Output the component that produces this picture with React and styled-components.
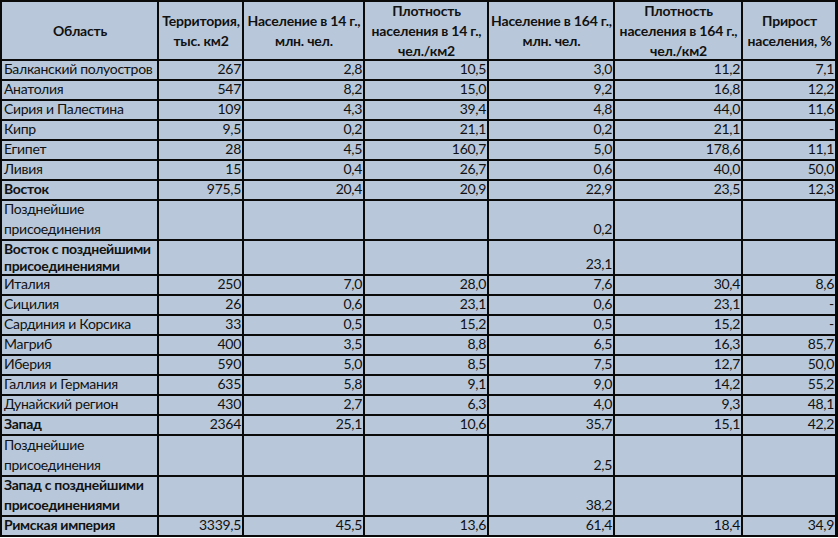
import React from 'react'
import styled, { createGlobalStyle } from 'styled-components'

const GlobalStyle = createGlobalStyle`
  html, body {
    margin: 0;
    padding: 0;
    background: #ffffff;
  }
  body {
    font-family: Lato, "Open Sans", "Liberation Sans", sans-serif;
    color: #111;
  }
`

const COLS = '155px 83px 119px 122px 124px 126px 92px'

const Sheet = styled.div`
  width: 838px;
  box-sizing: border-box;
  display: flex;
  flex-direction: column;
  gap: 2px;
  padding: 2px;
  background: #0a0a0a;
`

const Row = styled.div`
  display: grid;
  grid-template-columns: ${COLS};
  gap: 2px;
  height: ${p => p.h}px;
`

const Cell = styled.div`
  background: #b8c8da;
  display: flex;
  align-items: ${p => (p.head ? 'center' : 'flex-end')};
  justify-content: ${p => (p.head ? 'center' : p.num ? 'flex-end' : 'flex-start')};
  text-align: ${p => (p.head ? 'center' : p.num ? 'right' : 'left')};
  padding: 0 1px 0 2px;
  font-size: 14px;
  letter-spacing: ${p => (p.head ? '-0.2px' : '-0.3px')};
  line-height: ${p => (p.tight ? 17 : 20)}px;
  font-weight: ${p => (p.bold ? 700 : 400)};
  white-space: nowrap;
  overflow: hidden;
  min-width: 0;
`

const headers = [
  ['Область'],
  ['Территория,', 'тыс. км2'],
  ['Население в 14 г.,', 'млн. чел.'],
  ['Плотность', 'населения в 14 г.,', 'чел./км2'],
  ['Население в 164 г.,', 'млн. чел.'],
  ['Плотность', 'населения в 164 г.,', 'чел./км2'],
  ['Прирост', 'населения, %'],
]

const rows = [
  { name: ['Балканский полуостров'], v: ['267', '2,8', '10,5', '3,0', '11,2', '7,1'] },
  { name: ['Анатолия'], v: ['547', '8,2', '15,0', '9,2', '16,8', '12,2'] },
  { name: ['Сирия и Палестина'], v: ['109', '4,3', '39,4', '4,8', '44,0', '11,6'] },
  { name: ['Кипр'], v: ['9,5', '0,2', '21,1', '0,2', '21,1', '-'] },
  { name: ['Египет'], v: ['28', '4,5', '160,7', '5,0', '178,6', '11,1'] },
  { name: ['Ливия'], v: ['15', '0,4', '26,7', '0,6', '40,0', '50,0'] },
  { name: ['Восток'], bold: true, v: ['975,5', '20,4', '20,9', '22,9', '23,5', '12,3'] },
  { name: ['Позднейшие', 'присоединения'], h: 38, v: ['', '', '', '0,2', '', ''] },
  { name: ['Восток с позднейшими', 'присоединениями'], h: 33, tight: true, bold: true, v: ['', '', '', '23,1', '', ''] },
  { name: ['Италия'], v: ['250', '7,0', '28,0', '7,6', '30,4', '8,6'] },
  { name: ['Сицилия'], v: ['26', '0,6', '23,1', '0,6', '23,1', '-'] },
  { name: ['Сардиния и Корсика'], v: ['33', '0,5', '15,2', '0,5', '15,2', '-'] },
  { name: ['Магриб'], v: ['400', '3,5', '8,8', '6,5', '16,3', '85,7'] },
  { name: ['Иберия'], v: ['590', '5,0', '8,5', '7,5', '12,7', '50,0'] },
  { name: ['Галлия и Германия'], v: ['635', '5,8', '9,1', '9,0', '14,2', '55,2'] },
  { name: ['Дунайский регион'], v: ['430', '2,7', '6,3', '4,0', '9,3', '48,1'] },
  { name: ['Запад'], bold: true, v: ['2364', '25,1', '10,6', '35,7', '15,1', '42,2'] },
  { name: ['Позднейшие', 'присоединения'], h: 39, v: ['', '', '', '2,5', '', ''] },
  { name: ['Запад с позднейшими', 'присоединениями'], h: 38, bold: true, v: ['', '', '', '38,2', '', ''] },
  { name: ['Римская империя'], bold: true, v: ['3339,5', '45,5', '13,6', '61,4', '18,4', '34,9'] },
]

const Lines = ({ parts }) => (
  <span>
    {parts.map((t, i) => (
      <React.Fragment key={i}>
        {i > 0 && <br />}
        {t}
      </React.Fragment>
    ))}
  </span>
)

export default function App() {
  return (
    <>
      <GlobalStyle />
      <Sheet>
        <Row h={57}>
          {headers.map((h, i) => (
            <Cell key={i} head bold>
              <Lines parts={h} />
            </Cell>
          ))}
        </Row>
        {rows.map((r, i) => (
          <Row key={i} h={r.h || 18}>
            <Cell bold={r.bold} tight={r.tight}>
              <Lines parts={r.name} />
            </Cell>
            {r.v.map((val, j) => (
              <Cell key={j} num>{val}</Cell>
            ))}
          </Row>
        ))}
      </Sheet>
    </>
  )
}
